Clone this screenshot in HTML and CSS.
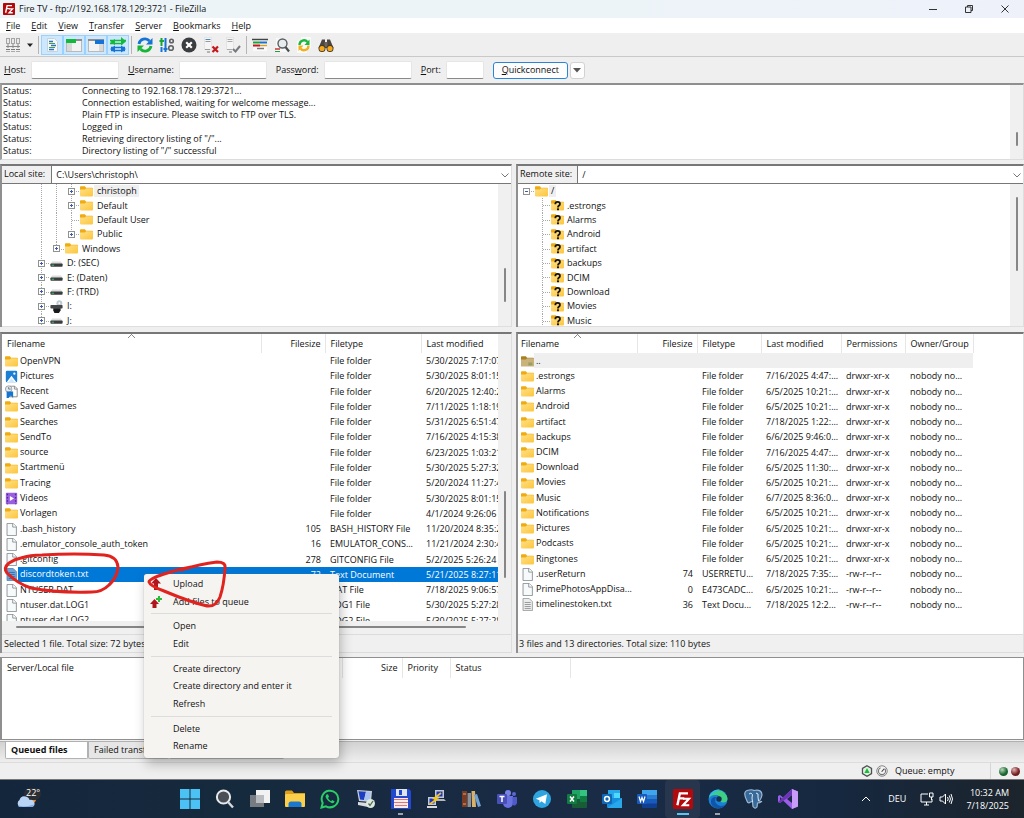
FILE: index.html
```html
<!DOCTYPE html>
<html lang="en">
<head>
<meta charset="utf-8">
<title>Fire TV - ftp://192.168.178.129:3721 - FileZilla</title>
<link rel="stylesheet" href="styles.css">
</head>
<body>
<svg class="sprite" aria-hidden="true">
  <linearGradient id="gFold" x1="0" y1="0" x2="1" y2="1"><stop offset="0" stop-color="#ffe08a"/><stop offset="1" stop-color="#fcc63c"/></linearGradient>
  <symbol id="folder" viewBox="0 0 16 16"><path d="M0 2.500Q0 1.500 1 1.500H6L7.500 3.500H15Q16 3.500 16 4.500V8H0Z" fill="#f0ab10"/><path d="M0 5.500H6L7.500 4H15.200Q16 4 16 5V13Q16 14 15 14H1Q0 14 0 13Z" fill="url(#gFold)"/></symbol>
  <symbol id="folderq" viewBox="0 0 16 16"><use href="#folder"/><path d="M5.300 6.500Q5.300 3.600 8.200 3.600Q11 3.600 11 6Q11 7.400 9.600 8.300Q8.600 9 8.600 10.400" fill="none" stroke="#111" stroke-width="2.200"/><rect x="7.400" y="11.500" width="2.400" height="2.300" fill="#111"/></symbol>
  <symbol id="folderup" viewBox="0 0 16 16"><path d="M0 2.500Q0 1.500 1 1.500H6L7.500 3.500H15Q16 3.500 16 4.500V8H0Z" fill="#a8801f"/><path d="M0 5.500H6L7.500 4H16V14H0Z" fill="#c9b37a"/><path d="M9 10h5M9 12h5" stroke="#7a8a5a"/></symbol>
  <symbol id="pics" viewBox="0 0 16 16"><rect x="1" y="1" width="14" height="14" rx="1.500" fill="#1b7fd6"/><path d="M2 15L8 7L14 15Z" fill="#fff"/><path d="M4 15L8 10L12 15Z" fill="#cfe8fb"/><circle cx="11.500" cy="4.500" r="1.400" fill="#fff"/></symbol>
  <symbol id="recent" viewBox="0 0 16 16"><path d="M6 1.500H12L15 4.500V14.500H6Z" fill="#fff" stroke="#777"/><path d="M11.500 1.500V5H15" fill="none" stroke="#777"/><circle cx="4.500" cy="5" r="4" fill="#e6e9ec" stroke="#8b949b"/><path d="M4.500 2.500V5H7" fill="none" stroke="#667"/><path d="M2 8H10V16L7 13L4.500 16H2Z" fill="#1576cf"/></symbol>
  <symbol id="video" viewBox="0 0 16 16"><rect x="1" y="1" width="14" height="14" rx="1" fill="#9a5fe0"/><path d="M3 2V15M13 2V15" stroke="#4f2390" stroke-width="1.500" stroke-dasharray="2 2"/><path d="M6 5L11 8L6 11Z" fill="#fff"/></symbol>
  <symbol id="file" viewBox="0 0 16 16"><path d="M2.500.500H10L14 4.500V15.500H2.500Z" fill="#f7fafb" stroke="#7d8386"/><path d="M9.500.500V5H14" fill="#fff" stroke="#7d8386"/></symbol>
  <symbol id="text" viewBox="0 0 16 16"><path d="M2.500.500H10L14 4.500V15.500H2.500Z" fill="#eceeee" stroke="#8d9294"/><path d="M4.500 5.500H12M4.500 8H12M4.500 10.500H12M4.500 13H12" stroke="#888"/></symbol>
  <symbol id="textsel" viewBox="0 0 16 16"><path d="M2.500.500H10L14 4.500V15.500H2.500Z" fill="#6ea5d8" stroke="#4a7fb5"/><path d="M4.500 5.500H12M4.500 8H12M4.500 10.500H12M4.500 13H12" stroke="#2f68a5"/></symbol>
  <symbol id="drive" viewBox="0 0 16 16"><path d="M2.500 5.500H13.500L15.500 9H.500Z" fill="#dcdcdc"/><rect x=".500" y="8" width="15" height="4" rx="1" fill="#3a3d3e"/><rect x="2" y="9.500" width="3" height="1.200" fill="#44c267"/></symbol>
  <symbol id="optical" viewBox="0 0 16 16"><circle cx="11.500" cy="4" r="3.600" fill="#bfcbd2"/><circle cx="11.500" cy="4" r="1.200" fill="#fff"/><rect x=".500" y="6" width="15" height="4.500" rx="1" fill="#444749"/><path d="M4 10H13V13L11 16H5.500L4 13Z" fill="#17191a"/></symbol>
  <symbol id="fz" viewBox="0 0 16 16"><rect width="16" height="16" rx="1" fill="#b3090d"/><path d="M3.500 13L5.500 3.500H12M4.800 7.500H9" fill="none" stroke="#fff" stroke-width="1.900"/><path d="M8 7.800H12.800L8 13H13" fill="none" stroke="#fff" stroke-width="1.700"/></symbol>
  <symbol id="caret-down" viewBox="0 0 8 8"><path d="M.500 2.500L4 6L7.500 2.500" fill="none" stroke="#777"/></symbol>
</svg>

<header class="titlebar">
  <svg class="app-icon" viewBox="0 0 16 16"><use href="#fz"/></svg>
  <span class="title">Fire TV - ftp://192.168.178.129:3721 - FileZilla</span>
  <div class="window-buttons">
    <button aria-label="Minimize"><svg viewBox="0 0 10 10"><path d="M1 5.500H9" /></svg></button>
    <button aria-label="Restore"><svg viewBox="0 0 10 10"><path d="M1.500 3H7V8.500H1.500ZM3.500 3V1.500H8.500V6.500H7"/></svg></button>
    <button aria-label="Close"><svg viewBox="0 0 10 10"><path d="M1.500 1.500L8.500 8.500M8.500 1.500L1.500 8.500"/></svg></button>
  </div>
</header>

<nav class="menubar">
  <button><u>F</u>ile</button><button><u>E</u>dit</button><button><u>V</u>iew</button><button><u>T</u>ransfer</button><button><u>S</u>erver</button><button><u>B</u>ookmarks</button><button><u>H</u>elp</button>
</nav>

<div class="toolbar">
  <button aria-label="Site Manager"><svg viewBox="0 0 16 16"><g fill="#e9e9e9" stroke="#a5a5a5"><rect x="1.500" y="1.500" width="3" height="5"/><rect x="6.500" y="1.500" width="3" height="5"/><rect x="11.500" y="1.500" width="3" height="5"/></g><path d="M3 7V11M8 7V11M13 7V11M1 9.500H15" stroke="#888" fill="none"/><path d="M1 12.500H5M6 12.500H10M11 12.500H15" stroke="#777"/><path d="M1 14.500H5M6 14.500H10M11 14.500H15" stroke="#aaa"/></svg></button>
  <button class="drop" aria-label="Site list"><svg viewBox="0 0 8 8"><path d="M1 2.500H7L4 6Z" fill="#222"/></svg></button>
  <i class="divider"></i>
  <button class="on" aria-label="Message log"><svg viewBox="0 0 16 16"><path d="M3.500 1.500H10.500L13.500 4.500V14.500H3.500Z" fill="#f4f7f9" stroke="#c6d3da"/><path d="M5 4.500H9M7 8.500H12M5 12.500H10" stroke="#2d74b8" stroke-width="1.300"/><path d="M5 6.500H11M5 10.500H11" stroke="#4a9a50" stroke-width="1.200"/></svg></button>
  <button class="on" aria-label="Local tree"><svg viewBox="0 0 16 16"><rect x=".500" y="2.500" width="15" height="12" fill="#f3f3f3" stroke="#b9b9b9"/><rect x="0" y="2" width="16" height="2" fill="#8e8e8e"/><rect x="0" y="2" width="10" height="4" fill="#13b93a"/><rect x="1" y="6" width="5" height="8" fill="#d9d9d9"/></svg></button>
  <button class="on" aria-label="Remote tree"><svg viewBox="0 0 16 16"><rect x=".500" y="2.500" width="15" height="12" fill="#f3f3f3" stroke="#b9b9b9"/><rect x="0" y="2" width="16" height="2" fill="#8e8e8e"/><rect x="7" y="3" width="9" height="4" fill="#1673d6"/><rect x="11" y="7" width="4" height="7" fill="#d9d9d9"/></svg></button>
  <button class="on" aria-label="Transfer queue"><svg viewBox="0 0 16 16"><path d="M0 3.500H16M0 6.500H13" stroke="#13b93a" stroke-width="1.500"/><path d="M11 0L16 4.500L11 8.500ZM5 2L0 5L5 8Z" fill="#13b93a"/><path d="M1 10.500H15M1 13.500H15" stroke="#1673d6" stroke-width="1.500"/><path d="M5 8.500L0 12L5 15.500ZM11 8.500L16 12L11 15.500Z" fill="#1673d6"/></svg></button>
  <i class="divider"></i>
  <button aria-label="Refresh"><svg viewBox="0 0 16 16"><path d="M2 7A6 6 0 0 1 12.500 4" fill="none" stroke="#1673d6" stroke-width="2.800"/><path d="M15.500 1V7.500H9Z" fill="#1673d6"/><path d="M14 9A6 6 0 0 1 3.500 12" fill="none" stroke="#17b53a" stroke-width="2.800"/><path d="M.500 15V8.500H7Z" fill="#17b53a"/></svg></button>
  <button aria-label="Process queue"><svg viewBox="0 0 16 16"><path d="M2.500 1V9M.500 4H5" stroke="#17a53a" stroke-width="2"/><path d="M6.500 1V15M4.500 12H8.500" stroke="#1673d6" stroke-width="2"/><path d="M2.500 10V15" stroke="#1673d6" stroke-width="2"/><g fill="none" stroke="#5e6265" stroke-width="1.600"><circle cx="12.500" cy="4" r="1.800"/><circle cx="12" cy="11" r="2.300"/></g></svg></button>
  <button aria-label="Cancel"><svg viewBox="0 0 16 16"><circle cx="8" cy="8" r="7.500" fill="#3a3e41"/><path d="M5.200 5.200L10.800 10.800M10.800 5.200L5.200 10.800" stroke="#fff" stroke-width="2.200"/></svg></button>
  <button aria-label="Disconnect"><svg viewBox="0 0 16 16"><rect x="1.500" y=".500" width="7" height="12" fill="#f5f5f5" stroke="#e4e4e4"/><path d="M2.500 2.500H7.500" stroke="#4a88c7"/><path d="M2.500 4.500H7.500M2 12.500H7" stroke="#999"/><path d="M4 15H7" stroke="#777"/><path d="M9.500 9.500L15 15M15 9.500L9.500 15" stroke="#c4161c" stroke-width="2.200"/></svg></button>
  <button aria-label="Reconnect"><svg viewBox="0 0 16 16"><rect x="1.500" y=".500" width="7" height="12" fill="#f5f5f5" stroke="#e4e4e4"/><path d="M2.500 2.500H7.500M2.500 4.500H7.500M2 12.500H7" stroke="#aaa"/><path d="M4 15H7" stroke="#777"/><path d="M8 12L10.500 14.500L15 9" fill="none" stroke="#777b7e" stroke-width="2"/></svg></button>
  <i class="divider"></i>
  <button aria-label="Filter"><svg viewBox="0 0 16 16"><rect x="1" y="2" width="14" height="12" fill="#fafafa"/><path d="M0 2.500H16" stroke="#444" stroke-width="1.500"/><path d="M1 5.500H8" stroke="#17a53a" stroke-width="2"/><path d="M1 8.500H8" stroke="#c4161c" stroke-width="2"/><path d="M8 5.500H15" stroke="#1673d6" stroke-width="2"/><path d="M8 8.500H15" stroke="#d9a020" stroke-width="1.500"/><path d="M5 11.500H12" stroke="#777" stroke-width="1.500"/></svg></button>
  <button aria-label="Compare"><svg viewBox="0 0 16 16"><path d="M2 1H11L14 4V15H2Z" fill="#f8f8f8"/><circle cx="8.500" cy="6.500" r="4.500" fill="#e7ecef" stroke="#5a5e61" stroke-width="1.400"/><path d="M11.500 10L15 14.500" stroke="#4a4e51" stroke-width="2.200"/><path d="M1 12H6" stroke="#c4161c" stroke-width="1.300"/><path d="M1 14.500H6" stroke="#17a53a"/></svg></button>
  <button aria-label="Synchronized browsing"><svg viewBox="0 0 16 16"><path d="M5 0H15V11H5ZM1 4H11V16H1Z" fill="#fafafa"/><path d="M3.500 8A4.500 4.500 0 0 1 11.500 5" fill="none" stroke="#19b83c" stroke-width="2.300"/><path d="M13.500 2.500V8H8.500Z" fill="#19b83c"/><path d="M12.500 8.500A4.500 4.500 0 0 1 4.500 11.500" fill="none" stroke="#f2ae1b" stroke-width="2.300"/><path d="M2.500 14V8.500H7.500Z" fill="#f2ae1b"/></svg></button>
  <button aria-label="Search"><svg viewBox="0 0 16 16"><path d="M4 2.500H7V6H9V2.500H12L15.500 11H.500Z" fill="#4a4541"/><rect x="6.500" y="5" width="3" height="5" fill="#6a645e"/><circle cx="4" cy="11.500" r="3.500" fill="#4a3b20"/><circle cx="12" cy="11.500" r="3.500" fill="#4a3b20"/><circle cx="4" cy="11.500" r="2.600" fill="#f5a81a"/><circle cx="12" cy="11.500" r="2.600" fill="#f5a81a"/></svg></button>
</div>

<form class="quickbar">
  <label for="host"><u>H</u>ost:</label><input id="host" class="wide">
  <label for="user"><u>U</u>sername:</label><input id="user" class="wide">
  <label for="pass">Pass<u>w</u>ord:</label><input id="pass" class="wide" type="password">
  <label for="port"><u>P</u>ort:</label><input id="port" class="narrow">
  <button type="button" class="connect"><u>Q</u>uickconnect</button>
  <button type="button" class="history" aria-label="History"><svg viewBox="0 0 8 8"><path d="M0 2H8L4 6.500Z" fill="#555"/></svg></button>
</form>

<section class="log">
  <table>
    <tr><td>Status:</td><td>Connecting to 192.168.178.129:3721...</td></tr>
    <tr><td>Status:</td><td>Connection established, waiting for welcome message...</td></tr>
    <tr><td>Status:</td><td>Plain FTP is insecure. Please switch to FTP over TLS.</td></tr>
    <tr><td>Status:</td><td>Logged in</td></tr>
    <tr><td>Status:</td><td>Retrieving directory listing of "/"...</td></tr>
    <tr><td>Status:</td><td>Directory listing of "/" successful</td></tr>
  </table>
  <div class="scroll"><i class="thumb log-thumb"></i></div>
</section>

<main class="panes">
  <section class="pane local">
    <div class="box site">
      <div class="site-row"><label for="lsite">Local site:</label><select id="lsite"><option>C:\Users\christoph\</option></select><svg><use href="#caret-down"/></svg></div>
      <div class="tree-wrap">
        <ul class="tree">
          <li><i class="guide"></i><i class="guide"></i><i class="guide arm"><button class="exp" aria-label="Expand"></button></i><svg><use href="#folder"/></svg><span class="cur">christoph</span></li>
          <li><i class="guide"></i><i class="guide"></i><i class="guide arm"><button class="exp" aria-label="Expand"></button></i><svg><use href="#folder"/></svg><span>Default</span></li>
          <li><i class="guide"></i><i class="guide"></i><i class="guide arm"></i><svg><use href="#folder"/></svg><span>Default User</span></li>
          <li><i class="guide"></i><i class="guide"></i><i class="guide arm last"><button class="exp" aria-label="Expand"></button></i><svg><use href="#folder"/></svg><span>Public</span></li>
          <li><i class="guide"></i><i class="guide arm last"><button class="exp" aria-label="Expand"></button></i><svg><use href="#folder"/></svg><span>Windows</span></li>
          <li><i class="guide arm"><button class="exp" aria-label="Expand"></button></i><svg><use href="#drive"/></svg><span>D: (SEC)</span></li>
          <li><i class="guide arm"><button class="exp" aria-label="Expand"></button></i><svg><use href="#drive"/></svg><span>E: (Daten)</span></li>
          <li><i class="guide arm"><button class="exp" aria-label="Expand"></button></i><svg><use href="#drive"/></svg><span>F: (TRD)</span></li>
          <li><i class="guide arm"><button class="exp" aria-label="Expand"></button></i><svg><use href="#optical"/></svg><span>I:</span></li>
          <li><i class="guide arm"><button class="exp" aria-label="Expand"></button></i><svg><use href="#drive"/></svg><span>J:</span></li>
        </ul>
        <div class="scroll"><i class="thumb ltree-thumb"></i></div>
      </div>
    </div>
    <div class="box files">
      <div class="list-wrap">
        <div class="list">
          <table>
            <colgroup><col class="l-name"><col class="l-size"><col class="l-type"><col class="l-mod"></colgroup>
            <thead><tr><th class="sorted">Filename</th><th class="num">Filesize</th><th>Filetype</th><th>Last modified</th></tr></thead>
            <tbody>
              <tr><td><svg><use href="#folder"/></svg>OpenVPN</td><td></td><td>File folder</td><td>5/30/2025 7:17:07</td></tr>
              <tr><td><svg><use href="#pics"/></svg>Pictures</td><td></td><td>File folder</td><td>5/30/2025 8:01:15</td></tr>
              <tr><td><svg><use href="#recent"/></svg>Recent</td><td></td><td>File folder</td><td>6/20/2025 12:40:2</td></tr>
              <tr><td><svg><use href="#folder"/></svg>Saved Games</td><td></td><td>File folder</td><td>7/11/2025 1:18:19</td></tr>
              <tr><td><svg><use href="#folder"/></svg>Searches</td><td></td><td>File folder</td><td>5/31/2025 6:51:47</td></tr>
              <tr><td><svg><use href="#folder"/></svg>SendTo</td><td></td><td>File folder</td><td>7/16/2025 4:15:38</td></tr>
              <tr><td><svg><use href="#folder"/></svg>source</td><td></td><td>File folder</td><td>6/23/2025 1:03:21</td></tr>
              <tr><td><svg><use href="#folder"/></svg>Startmenü</td><td></td><td>File folder</td><td>5/30/2025 5:27:32</td></tr>
              <tr><td><svg><use href="#folder"/></svg>Tracing</td><td></td><td>File folder</td><td>5/20/2024 11:27:4</td></tr>
              <tr><td><svg><use href="#video"/></svg>Videos</td><td></td><td>File folder</td><td>5/30/2025 8:01:15</td></tr>
              <tr><td><svg><use href="#folder"/></svg>Vorlagen</td><td></td><td>File folder</td><td>4/1/2024 9:26:06</td></tr>
              <tr><td><svg><use href="#file"/></svg>.bash_history</td><td class="num">105</td><td>BASH_HISTORY File</td><td>11/20/2024 8:35:2</td></tr>
              <tr><td><svg><use href="#file"/></svg>.emulator_console_auth_token</td><td class="num">16</td><td>EMULATOR_CONS...</td><td>11/21/2024 2:30:4</td></tr>
              <tr><td><svg><use href="#file"/></svg>.gitconfig</td><td class="num">278</td><td>GITCONFIG File</td><td>5/2/2025 5:26:24</td></tr>
              <tr class="selected"><td><svg><use href="#textsel"/></svg>discordtoken.txt</td><td class="num">72</td><td>Text Document</td><td>5/21/2025 8:27:11</td></tr>
              <tr><td><svg><use href="#file"/></svg>NTUSER.DAT</td><td class="num"></td><td>DAT File</td><td>7/18/2025 9:06:57</td></tr>
              <tr><td><svg><use href="#file"/></svg>ntuser.dat.LOG1</td><td class="num"></td><td>LOG1 File</td><td>5/30/2025 5:27:28</td></tr>
              <tr><td><svg><use href="#file"/></svg>ntuser.dat.LOG2</td><td class="num"></td><td>LOG2 File</td><td>5/30/2025 5:27:28</td></tr>
            </tbody>
          </table>
        </div>
        <div class="scroll"><i class="thumb llist-thumb"></i></div>
      </div>
      <div class="hscroll"><i></i></div>
      <div class="pane-status">Selected 1 file. Total size: 72 bytes</div>
    </div>
  </section>

  <section class="pane remote">
    <div class="box site">
      <div class="site-row"><label for="rsite">Remote site:</label><select id="rsite"><option>/</option></select><svg><use href="#caret-down"/></svg></div>
      <div class="tree-wrap">
        <ul class="tree">
          <li><i class="guide root"><button class="exp open" aria-label="Collapse"></button></i><svg><use href="#folder"/></svg><span class="cur">/</span></li>
          <li><i class="guide none"></i><i class="guide arm"></i><svg><use href="#folderq"/></svg><span>.estrongs</span></li>
          <li><i class="guide none"></i><i class="guide arm"></i><svg><use href="#folderq"/></svg><span>Alarms</span></li>
          <li><i class="guide none"></i><i class="guide arm"></i><svg><use href="#folderq"/></svg><span>Android</span></li>
          <li><i class="guide none"></i><i class="guide arm"></i><svg><use href="#folderq"/></svg><span>artifact</span></li>
          <li><i class="guide none"></i><i class="guide arm"></i><svg><use href="#folderq"/></svg><span>backups</span></li>
          <li><i class="guide none"></i><i class="guide arm"></i><svg><use href="#folderq"/></svg><span>DCIM</span></li>
          <li><i class="guide none"></i><i class="guide arm"></i><svg><use href="#folderq"/></svg><span>Download</span></li>
          <li><i class="guide none"></i><i class="guide arm"></i><svg><use href="#folderq"/></svg><span>Movies</span></li>
          <li><i class="guide none"></i><i class="guide arm"></i><svg><use href="#folderq"/></svg><span>Music</span></li>
        </ul>
        <div class="scroll"><i class="thumb rtree-thumb"></i></div>
      </div>
    </div>
    <div class="box files">
      <div class="list-wrap">
        <div class="list">
          <table>
            <colgroup><col class="r-name"><col class="r-size"><col class="r-type"><col class="r-mod"><col class="r-perm"><col class="r-own"></colgroup>
            <thead><tr><th class="sorted">Filename</th><th class="num">Filesize</th><th>Filetype</th><th>Last modified</th><th>Permissions</th><th>Owner/Group</th></tr></thead>
            <tbody>
              <tr class="focus"><td><svg><use href="#folderup"/></svg>..</td><td></td><td></td><td></td><td></td><td></td></tr>
              <tr><td><svg><use href="#folder"/></svg>.estrongs</td><td></td><td>File folder</td><td>7/16/2025 4:47:...</td><td>drwxr-xr-x</td><td>nobody no...</td></tr>
              <tr><td><svg><use href="#folder"/></svg>Alarms</td><td></td><td>File folder</td><td>6/5/2025 10:21:...</td><td>drwxr-xr-x</td><td>nobody no...</td></tr>
              <tr><td><svg><use href="#folder"/></svg>Android</td><td></td><td>File folder</td><td>6/5/2025 10:21:...</td><td>drwxr-xr-x</td><td>nobody no...</td></tr>
              <tr><td><svg><use href="#folder"/></svg>artifact</td><td></td><td>File folder</td><td>7/18/2025 1:22:...</td><td>drwxr-xr-x</td><td>nobody no...</td></tr>
              <tr><td><svg><use href="#folder"/></svg>backups</td><td></td><td>File folder</td><td>6/6/2025 9:46:0...</td><td>drwxr-xr-x</td><td>nobody no...</td></tr>
              <tr><td><svg><use href="#folder"/></svg>DCIM</td><td></td><td>File folder</td><td>7/16/2025 4:47:...</td><td>drwxr-xr-x</td><td>nobody no...</td></tr>
              <tr><td><svg><use href="#folder"/></svg>Download</td><td></td><td>File folder</td><td>6/5/2025 11:30:...</td><td>drwxr-xr-x</td><td>nobody no...</td></tr>
              <tr><td><svg><use href="#folder"/></svg>Movies</td><td></td><td>File folder</td><td>6/5/2025 10:21:...</td><td>drwxr-xr-x</td><td>nobody no...</td></tr>
              <tr><td><svg><use href="#folder"/></svg>Music</td><td></td><td>File folder</td><td>6/7/2025 8:36:0...</td><td>drwxr-xr-x</td><td>nobody no...</td></tr>
              <tr><td><svg><use href="#folder"/></svg>Notifications</td><td></td><td>File folder</td><td>6/5/2025 10:21:...</td><td>drwxr-xr-x</td><td>nobody no...</td></tr>
              <tr><td><svg><use href="#folder"/></svg>Pictures</td><td></td><td>File folder</td><td>6/5/2025 10:21:...</td><td>drwxr-xr-x</td><td>nobody no...</td></tr>
              <tr><td><svg><use href="#folder"/></svg>Podcasts</td><td></td><td>File folder</td><td>6/5/2025 10:21:...</td><td>drwxr-xr-x</td><td>nobody no...</td></tr>
              <tr><td><svg><use href="#folder"/></svg>Ringtones</td><td></td><td>File folder</td><td>6/5/2025 10:21:...</td><td>drwxr-xr-x</td><td>nobody no...</td></tr>
              <tr><td><svg><use href="#file"/></svg>.userReturn</td><td class="num">74</td><td>USERRETU...</td><td>7/18/2025 7:35:...</td><td>-rw-r--r--</td><td>nobody no...</td></tr>
              <tr><td><svg><use href="#file"/></svg>PrimePhotosAppDisa...</td><td class="num">0</td><td>E473CADC...</td><td>6/5/2025 10:21:...</td><td>-rw-r--r--</td><td>nobody no...</td></tr>
              <tr><td><svg><use href="#text"/></svg>timelinestoken.txt</td><td class="num">36</td><td>Text Docu...</td><td>7/18/2025 12:2...</td><td>-rw-r--r--</td><td>nobody no...</td></tr>
            </tbody>
          </table>
        </div>
      </div>
      <div class="pane-status">3 files and 13 directories. Total size: 110 bytes</div>
    </div>
  </section>
</main>

<section class="queue">
  <table>
    <colgroup><col class="q-file"><col class="q-size"><col class="q-prio"><col class="q-stat"></colgroup>
    <thead><tr><th>Server/Local file</th><th class="num">Size</th><th>Priority</th><th>Status</th></tr></thead>
  </table>
</section>
<div class="tabs"><button class="active">Queued files</button><button>Failed transfers</button><button class="wide-tab" aria-label="Successful transfers"></button></div>

<footer class="statusbar">
  <svg viewBox="0 0 16 16"><path d="M8 1L14 4.500V11.500L8 15L2 11.500V4.500Z" fill="#eee" stroke="#4d5154" stroke-width="1.800"/><circle cx="8" cy="8" r="4.500" fill="#d7f5d9"/><path d="M8 4L11.500 10.500H4.500Z" fill="#1fba3c"/></svg>
  <svg viewBox="0 0 16 16"><circle cx="8" cy="8" r="7" fill="#f3f3f3" stroke="#666"/><circle cx="8" cy="8" r="4.800" fill="none" stroke="#777" stroke-width="1.500" stroke-dasharray="20 6"/><path d="M7.500 9L11 5" stroke="#444" stroke-width="1.500"/></svg>
  <span class="queue-text">Queue: empty</span>
  <div class="leds"><i class="led green"></i><i class="led red"></i></div>
</footer>

<nav class="taskbar">
  <div class="weather">
    <svg viewBox="0 0 26 24"><circle cx="17" cy="12" r="4" fill="#e98a2e"/><rect x="9" y="1" width="17" height="12" rx="6" fill="#2b2e33"/><path d="M5 20A4 4 0 0 1 4.500 13Q6 8.500 10.500 9.500Q14 10 14.500 13A3.600 3.600 0 0 1 17 20Z" fill="#b9d4f5"/><path d="M3 18Q8 21 19 17.500Q18.500 20 16.500 20H5Q3 20 3 18Z" fill="#7eaae6"/></svg>
    <span>22°</span>
  </div>
  <div class="apps">
    <button aria-label="Start"><svg viewBox="0 0 20 20"><path d="M0 0H9.500V9.500H0ZM10.500 0H20V9.500H10.500ZM0 10.500H9.500V20H0ZM10.500 10.500H20V20H10.500Z" fill="#4cc2f4"/></svg></button>
    <button aria-label="Search"><svg viewBox="0 0 20 20"><circle cx="8.500" cy="8" r="6.600" fill="#4a4f57" stroke="#e8eaed" stroke-width="2"/><path d="M13 13L18 18.500" stroke="#d5d8dc" stroke-width="2.400"/></svg></button>
    <button aria-label="Task view"><svg viewBox="0 0 20 20"><rect x="6" y="1" width="14" height="13" fill="#f2f2f2"/><rect x="0" y="6" width="14" height="12" fill="#777c82"/><rect x="6" y="6" width="8" height="8" fill="#b9bcc0"/></svg></button>
    <button aria-label="Explorer"><svg viewBox="0 0 20 20"><path d="M0 3Q0 1.500 1.500 1.500H7L9 4H20V9H0Z" fill="#dfa019"/><path d="M1 5H20V17Q20 18 19 18H1Q0 18 0 17V6Z" fill="#fcd04a"/><path d="M3.500 18V15Q3.500 12.500 6 12.500H14Q16.500 12.500 16.500 15V18Z" fill="#1b78cc"/></svg></button>
    <button aria-label="WhatsApp"><svg viewBox="0 0 20 20"><path d="M1.500 18.500L2.700 14A8.300 8.300 0 1 1 6 17.300Z" fill="none" stroke="#29cf66" stroke-width="2"/><path d="M6.300 5.500Q5 7 6 9Q8 13 12 14.300Q14 14.500 14.700 12.500L12.300 11L11 12.200Q8.800 11 8 9L9 7.800L8 5.300Z" fill="#29cf66"/></svg></button>
    <button aria-label="Remote desktop"><svg viewBox="0 0 20 20"><path d="M1 1L16 2L15 13L3 12Z" fill="#c8ced8"/><path d="M2.500 2.200L10 2.800L8 11L4 10.500Z" fill="#1b3fc0"/><path d="M10 2.800L14.500 3.200L13.800 11.500L8 11Z" fill="#a9c3f0"/><path d="M2 13L12 14V18L2 16Z" fill="#d9dde0"/><circle cx="14.500" cy="14.500" r="4.500" fill="#dfe8df"/><path d="M12.500 14.500L14 16.500L17 12" stroke="#4a6f50" fill="none" stroke-width="1.300"/></svg></button>
    <button class="running" aria-label="Editor"><svg viewBox="0 0 20 20"><path d="M0 0H18L20 2V20H0Z" fill="#2148cf"/><rect x="5" y="0" width="11" height="7" fill="#dde3ee"/><rect x="8" y="1" width="3" height="5" fill="#2148cf"/><rect x="3" y="9" width="14" height="10" fill="#f7eaea"/><path d="M3 10.500H17M3 13.500H17M4 16.500H16" stroke="#dc7478" stroke-width="1.200"/></svg></button>
    <button aria-label="PuTTY"><svg viewBox="0 0 20 20"><rect x="9" y="1" width="9" height="8" fill="#c7c9cf"/><rect x="10.500" y="2.500" width="6" height="5" fill="#1736c9"/><path d="M8 10H18L20 12H8Z" fill="#b4b6bd"/><rect x="2" y="8" width="8" height="8" fill="#c7c9cf"/><rect x="3.500" y="9.500" width="5" height="5" fill="#1736c9"/><path d="M1 17H11V19H1Z" fill="#d8dae0"/><path d="M15 4L8 9.500L11 10L4 15" stroke="#f3c51a" stroke-width="1.800" fill="none"/></svg></button>
    <button aria-label="Calibre"><svg viewBox="0 0 20 20"><rect x="1" y="2" width="5" height="16" fill="#7a3a24"/><path d="M2 5H5M2 15H5" stroke="#d5a86b"/><rect x="6.500" y="4" width="3.500" height="14" fill="#8d9298"/><path d="M10.500 2L14 2L15 18H11Z" fill="#d9b169"/><path d="M13 6L16 5L20 17L17 18Z" fill="#6fa3d6"/></svg></button>
    <button aria-label="Teams"><svg viewBox="0 0 20 20"><circle cx="11" cy="4" r="3" fill="#7b83eb"/><circle cx="17" cy="5" r="2" fill="#5e66cf"/><path d="M6 7H16V14A5 5 0 0 1 6 14Z" fill="#6a72e0"/><path d="M15.500 8H20V13A3 3 0 0 1 15.500 16Z" fill="#5059c9"/><rect x="0" y="5" width="10" height="10" rx="1" fill="#4850b8"/><path d="M2.500 7.500H7.500M5 7.500V13" stroke="#fff" stroke-width="1.500"/></svg></button>
    <button aria-label="Telegram"><svg viewBox="0 0 20 20"><circle cx="10" cy="10" r="9" fill="#2ea5e0"/><path d="M3.800 9.800L15 5.300L13.300 15L9.500 12.300L7.500 14V11.300Z" fill="#fff"/></svg></button>
    <button aria-label="Excel"><svg viewBox="0 0 20 20"><rect x="5" y="1" width="15" height="18" rx="1" fill="#185c37"/><rect x="5" y="1" width="8" height="9" fill="#21a366"/><rect x="13" y="1" width="7" height="6" fill="#33c481"/><rect x="13" y="7" width="7" height="6" fill="#107c41"/><rect x="0" y="5" width="10" height="10" rx="1" fill="#107c41"/><path d="M3 7.500L7 12.500M7 7.500L3 12.500" stroke="#fff" stroke-width="1.500"/></svg></button>
    <button aria-label="Outlook"><svg viewBox="0 0 20 20"><rect x="6" y="1" width="12" height="12" fill="#28a8ea"/><rect x="12" y="4" width="6" height="5" fill="#50d9ff"/><path d="M5 9L20 9V18Q20 19 19 19H6L5 18Z" fill="#1490df"/><path d="M5 19L20 9V19Z" fill="#28a8ea"/><rect x="0" y="5" width="10" height="10" rx="1" fill="#0f68b8"/><circle cx="5" cy="10" r="2.400" fill="none" stroke="#fff" stroke-width="1.500"/></svg></button>
    <button aria-label="Word"><svg viewBox="0 0 20 20"><rect x="5" y="1" width="15" height="18" rx="1" fill="#103f91"/><rect x="5" y="1" width="15" height="5" fill="#41a5ee"/><rect x="5" y="6" width="15" height="4" fill="#2b7cd3"/><rect x="5" y="10" width="15" height="4.500" fill="#185abd"/><rect x="0" y="5" width="10" height="10" rx="1" fill="#185abd"/><path d="M2 7.500L3.500 12.500L5 8.500L6.500 12.500L8 7.500" fill="none" stroke="#fff" stroke-width="1.200"/></svg></button>
    <button class="current" aria-label="FileZilla"><svg viewBox="0 0 16 16"><use href="#fz"/></svg></button>
    <button class="running" aria-label="Edge"><svg viewBox="0 0 20 20"><circle cx="10" cy="10" r="9.500" fill="#1c7fd6"/><path d="M1 8A9.500 9.500 0 0 1 19.500 9.500Q19.500 13.500 15 13.500Q11.500 13 13 10.500Q12 5.500 7 6Q3 6 1 9Z" fill="#3fcf84"/><path d="M1 8A9.500 9.500 0 0 1 12 .800Q6 3 3.500 6Z" fill="#35bde6"/><path d="M8 8Q5.500 13 10 16Q14 18 17.500 15.500Q14 20 9 19.400Q2 17.500 3 11Q4.500 7.500 8 8Z" fill="#0f55a8"/><circle cx="11" cy="10" r="2.700" fill="#12304f"/></svg></button>
    <button aria-label="PostgreSQL"><svg viewBox="0 0 20 20"><path d="M4 1.500Q9 0 11 1.500Q19 0 19 6Q18 11 15.500 12Q18 12 18.500 12.500Q17 14 14.500 14L14 18Q12 20.500 10 17.500L9.500 12.500L7.500 13Q5 15 4 12Q1 6 2 3.500Q2.500 2 4 1.500Z" fill="#38699b" stroke="#9db9d2" stroke-width="1.200"/><path d="M6 5Q8 3 9.500 5.500L9 9L9.500 13M13 4Q16 4 15 8L15.500 12" fill="none" stroke="#dfe9f2" stroke-width="1"/></svg></button>
    <button aria-label="Visual Studio"><svg viewBox="0 0 20 20"><path d="M14 0L20 2.500V17.500L14 20L5 11.500L2 14L0 13V7L2 6L5 8.500Z" fill="#9b5ee8"/><path d="M14 0L20 2.500V17.500L14 20Z" fill="#c79bf7"/><path d="M14 6V14L9 10ZM2 8V12L4 10Z" fill="#182a44"/><path d="M0 13L14 0V6L2 14Z" fill="#6c35b5"/></svg></button>
  </div>
  <div class="tray">
    <svg class="chev" viewBox="0 0 10 10"><path d="M1 7L5 3L9 7"/></svg>
    <span>DEU</span>
    <svg class="net" viewBox="0 0 14 14"><path d="M8 2H1V10H12V7M4 13H9M6.500 10V13M9.500 1H13V5H9.500ZM11.500 5V8"/></svg>
    <svg class="vol" viewBox="0 0 14 14"><path d="M1 5H3.500L6.500 2V12L3.500 9H1ZM8.500 5Q10 7 8.500 9M10.300 3.500Q12.600 7 10.300 10.500M12 2Q15 7 12 12"/></svg>
    <div class="clock"><time>10:32 AM</time><time>7/18/2025</time></div>
  </div>
</nav>

<div class="context" role="menu">
  <button role="menuitem"><svg viewBox="0 0 12 12"><path d="M6 0L11 5.500H8V12H4V5.500H1Z" fill="#b0161b"/></svg>Upload</button>
  <button role="menuitem"><svg viewBox="0 0 12 12"><path d="M4.500 3L9 8H6.500V12H2.500V8H0Z" fill="#b0161b"/><path d="M9 0V6M6 3H12" stroke="#2dbb3c" stroke-width="2"/></svg>Add files to queue</button>
  <hr>
  <button role="menuitem">Open</button>
  <button role="menuitem">Edit</button>
  <hr>
  <button role="menuitem">Create directory</button>
  <button role="menuitem">Create directory and enter it</button>
  <button role="menuitem">Refresh</button>
  <hr>
  <button role="menuitem">Delete</button>
  <button role="menuitem">Rename</button>
</div>

<svg class="marks" viewBox="0 0 240 60" aria-hidden="true">
  <path d="M21 9Q30 6 42 6Q75 4 104 6Q117 7 118 18Q117 29 109 36Q102 43 92 43Q55 44 31 39Q18 35 7 24Q3 19 9 14Q15 10 21 9"/>
  <path d="M191 18Q178 20 164 25Q149 30 149 33Q150 37 164 42Q190 53 207 57Q216 58 220 48Q224 36 225 19Q226 13 217 13Q200 15 181 21"/>
</svg>
</body>
</html>
```
FILE: styles.css
```css
* { box-sizing: border-box; }
body {
  margin: 0;
  min-height: 100vh;
  display: flex;
  flex-direction: column;
  position: relative;
  overflow-x: hidden;
  background: #efefef;
  color: #111;
  font: 9px/12px "Open Sans", "Noto Sans", sans-serif;
}
button, input, select { font: inherit; color: inherit; margin: 0; }
button { border: 0; padding: 0; background: none; }
table { border-collapse: collapse; border-spacing: 0; table-layout: fixed; }
th { font-weight: 400; text-align: left; }
td, th { white-space: nowrap; overflow: hidden; }
.sprite { position: absolute; width: 0; height: 0; }

/* Title and menus */
.titlebar {
  display: flex;
  align-items: center;
  height: 18px;
  padding-left: 3px;
  gap: 4px;
  background: linear-gradient(90deg, #edf4f8 60%, #eef1fa);
}
.app-icon { width: 12px; height: 12px; }
.title { flex: 1; }
.window-buttons { display: flex; padding-right: 1px; }
.window-buttons button { width: 36px; height: 16px; display: grid; place-items: center; }
.window-buttons svg { width: 10px; height: 10px; fill: none; stroke: #333; }
.menubar { display: flex; gap: 11px; height: 15px; padding-left: 6px; background: #fff; align-items: center; }

/* Toolbar */
.toolbar { display: flex; align-items: center; height: 24px; padding-left: 2px; border-bottom: 1px solid #c9c9c9; }
.toolbar button { width: 22px; height: 20px; display: grid; place-items: center; }
.toolbar button svg { width: 16px; height: 16px; }
.toolbar .drop { width: 12px; }
.toolbar .drop svg { width: 8px; height: 8px; }
.toolbar .on { background: #cce8ff; border: 1px solid #99d1ff; }
.divider { width: 1px; height: 18px; margin: 0 2px; background: #b5b5b5; }

/* Quickconnect */
.quickbar { display: flex; align-items: center; height: 26px; padding-left: 4px; }
.quickbar input {
  height: 18px;
  margin: 0 9px 0 5px;
  padding: 0 3px;
  border: 1px solid #e5e5e5;
  border-bottom-color: #8a8a8a;
  border-radius: 2px;
  background: #fff;
}
.quickbar .wide { width: 88px; }
.quickbar .narrow { width: 38px; }
.connect { width: 75px; height: 17px; border: 1px solid #2a84d8; border-radius: 3px; background: #fdfdfd; }
.history { width: 15px; height: 17px; margin-left: 2px; border: 1px solid #d2d2d2; border-radius: 3px; background: #fdfdfd; display: grid; place-items: center; }
.history svg { width: 8px; height: 8px; }

/* Scroll bars */
.scroll { width: 13px; flex: none; display: flex; flex-direction: column; align-items: center; background: #f0f0f0; }
.thumb { width: 2px; border-radius: 1px; background: #868686; }
.log-thumb { height: 14px; margin-top: 47px; }
.ltree-thumb { height: 34px; margin-top: 84px; }
.rtree-thumb { height: 74px; margin-top: 13px; }
.llist-thumb { height: 87px; margin-top: 157px; }

/* Message log */
.log {
  display: flex;
  height: 77px;
  margin-bottom: 4px;
  border: 1px solid #dcdcdc;
  border-top: 2px solid #8f8f8f;
  border-left: 2px solid #a0a0a0;
  background: #fff;
}
.log table { flex: 1; display: block; }
.log td { padding: 0 0 0 1px; height: 12px; }
.log td:first-child { width: 79px; }

/* Two panes */
.panes { display: flex; gap: 4px; }
.pane { flex: 508 1 0; min-width: 0; display: flex; flex-direction: column; gap: 5px; }
.pane.local { flex-grow: 512; }
.box { border-left: 2px solid #8f8f8f; border-top: 2px solid #777; border-right: 1px solid #dedede; }
.site-row { display: flex; align-items: center; height: 18px; border-bottom: 1px solid #777; background: #fff; }
.site-row label { align-self: stretch; padding: 2px 5px 0 2px; border-right: 1px solid #777; background: #f0f0f0; }
.local .site-row label { padding-right: 6px; }
.site-row select { flex: 1; align-self: stretch; padding: 0 4px; border: 0; appearance: none; background: none; }
.site-row svg { width: 8px; height: 8px; margin-right: 2px; }
.tree-wrap { display: flex; height: 143px; overflow: hidden; background: #fff; border-bottom: 1px solid #dedede; }
.tree { flex: 1; list-style: none; margin: 0; padding: 0 0 0 32px; height: 144px; display: grid; grid-auto-rows: 1fr; }
.remote .tree { padding-left: 1px; }
.tree li { display: flex; align-items: center; }
.tree svg { width: 13px; height: 13px; margin: 0 1px; }
.tree span { padding: 0 2px; }
.local .tree span { padding-left: 3px; }
.tree .cur { background: #efefef; }
.guide {
  width: 15px;
  align-self: stretch;
  display: grid;
  place-items: center;
  background: repeating-linear-gradient(#a8a8a8 0 1px, transparent 1px 2px) 7px 0 / 1px 100% no-repeat;
}
.guide.none { width: 16px; background: none; }
.guide.arm {
  background:
    repeating-linear-gradient(#a8a8a8 0 1px, transparent 1px 2px) 7px 0 / 1px 100% no-repeat,
    repeating-linear-gradient(90deg, #a8a8a8 0 1px, transparent 1px 2px) 8px 7px / 8px 1px no-repeat;
}
.guide.last { background-size: 1px 50%, 8px 1px; }
.guide.root { background: repeating-linear-gradient(90deg, #a8a8a8 0 1px, transparent 1px 2px) 8px 7px / 8px 1px no-repeat; }
.exp {
  width: 7px;
  height: 7px;
  border: 1px solid #919191;
  background:
    linear-gradient(#3b5fa8, #3b5fa8) center / 3px 1px no-repeat,
    linear-gradient(#3b5fa8, #3b5fa8) center / 1px 3px no-repeat,
    #fff;
}
.exp.open { background: linear-gradient(#3b5fa8, #3b5fa8) center / 3px 1px no-repeat, #fff; }

/* File lists */
.files { flex: 1; display: flex; flex-direction: column; background: #f0f0f0; }
.list-wrap { flex: 1; display: flex; background: #fff; min-height: 0; }
.local .list-wrap { height: 287px; flex: none; }
.list { flex: 1; min-width: 0; overflow: hidden; }
.list table { height: 278px; width: 455px; }
.local .list table { height: 294px; width: 519px; }
.l-name { width: 259px; }
.l-size { width: 64px; }
.l-type { width: 96px; }
.l-mod { width: 100px; }
.r-name { width: 119px; }
.r-size { width: 60px; }
.r-type { width: 64px; }
.r-mod { width: 80px; }
.r-perm { width: 64px; }
.r-own { width: 68px; }
.list th, .queue th { height: 19px; padding: 0 4px 0 5px; border-right: 1px solid #e6e6e6; }
.list td { padding: 0 0 0 5px; line-height: 13px; }
.list td:first-child { padding-left: 3px; }
.remote .list td:first-child, .remote .sorted { padding-left: 3px; }
.list .num, .queue .num { text-align: right; padding-right: 4px; }
.list td svg { width: 13px; height: 13px; margin-right: 2px; vertical-align: middle; }
.sorted {
  background:
    linear-gradient(45deg, transparent 40%, #888 40% 60%, transparent 60%) calc(50% + 2px) 0 / 4px 4px no-repeat,
    linear-gradient(-45deg, transparent 40%, #888 40% 60%, transparent 60%) calc(50% - 1px) 0 / 4px 4px no-repeat;
}
.selected { background: #0078d7; color: #fff; }
.selected td:first-child { background: linear-gradient(90deg, #fff 16px, #0078d7 16px); }
.focus { background: #efefef; }
.focus td:first-child { background: linear-gradient(90deg, #fff 16px, #efefef 16px); }
.hscroll { height: 13px; padding: 5px 0 0 14px; }
.hscroll i { display: block; height: 2px; width: 450px; max-width: 92%; background: #868686; border-radius: 1px; }
.pane-status { height: 19px; padding: 3px 2px; border-top: 1px solid #dcdcdc; border-bottom: 1px solid #dcdcdc; }
.remote .pane-status { padding-left: 1px; }

/* Queue */
.queue { flex: 1; min-height: 83px; margin-top: 4px; border: 1px solid #8f8f8f; border-left-width: 2px; background: #fff; }
.queue table { width: 568px; }
.q-file { width: 340px; }
.q-size { width: 60px; }
.q-prio { width: 48px; }
.q-stat { width: 120px; }
.queue th { height: 20px; }
.tabs {
  display: flex;
  align-items: flex-start;
  height: 22px;
  margin-top: 1px;
  padding-left: 5px;
  border-top: 1px solid #b0b0b0;
  border-bottom: 1px solid #dcdcdc;
  background: linear-gradient(#d2d2d2, #eee);
}
.tabs button { height: 17px; width: 81px; padding-left: 5px; border: 1px solid #b2b2b2; border-top: 0; border-radius: 0 0 2px 2px; background: #e6e6e6; text-align: left; white-space: nowrap; }
.tabs .active { width: 83px; background: #fff; font-weight: 700; }
.tabs .wide-tab { width: 115px; }
.statusbar { display: flex; align-items: center; justify-content: flex-end; height: 17px; gap: 3px; border-bottom: 1px solid #777; }
.statusbar svg { width: 12px; height: 12px; }
.queue-text { width: 96px; padding-left: 4px; }
.leds { display: flex; gap: 3px; height: 16px; align-items: center; padding: 0 4px 0 8px; border-left: 1px solid #d5d5d5; }
.led { width: 9px; height: 9px; border-radius: 50%; }
.green { background: radial-gradient(circle at 35% 30%, #b9d8bd, #1d6a30 55%, #0f4a1e); }
.red { background: radial-gradient(circle at 35% 30%, #e0b5b5, #7a2226 55%, #521013); }

/* Taskbar */
.taskbar { display: flex; height: 38px; align-items: center; background: linear-gradient(90deg, #14263b, #162a3e 25%, #1a2b46 60%, #16283f 82%, #1c242c); color: #fff; }
.weather { width: 172px; padding-left: 15px; position: relative; }
.weather svg { width: 26px; height: 24px; display: block; }
.weather span { position: absolute; left: 26px; top: 0; }
.apps { display: grid; grid-template-columns: repeat(18, 1fr); flex: 0 1 634px; height: 38px; }
.apps button { display: grid; place-items: center; }
.apps button svg { width: 20px; height: 20px; }
.apps .running { background: linear-gradient(#9ba2ab, #9ba2ab) center 33px / 5px 2px no-repeat; }
.apps .current { border-radius: 4px; background: linear-gradient(#58c5f5, #58c5f5) center 33px / 12px 2px no-repeat, #27364d; }
.tray { margin-left: auto; padding-right: 15px; display: flex; align-items: center; }
.tray svg { fill: none; stroke: #fff; width: 14px; height: 14px; }
.tray .chev { width: 10px; height: 10px; margin-right: 17px; }
.tray .net { margin-left: 14px; }
.tray .vol { margin: 0 13px 0 5px; }
.clock { display: flex; flex-direction: column; text-align: right; }
.clock time { line-height: 13px; }

/* Menu opened over the lists */
.context {
  position: absolute;
  left: 144px;
  top: 574px;
  width: 195px;
  height: 184px;
  padding: 1px 0 3px;
  display: flex;
  flex-direction: column;
  background: #f6f4f1;
  border-radius: 3px;
  box-shadow: 0 0 1px #888, 2px 6px 12px rgba(0, 0, 0, .25);
}
.context button { flex: 1; display: flex; align-items: center; text-align: left; padding-left: 29px; }
.context button svg { width: 12px; height: 12px; margin: 0 11px 0 -23px; }
.context hr { height: 1px; margin: 3px 7px; border: 0; background: #dcdcdc; }
.marks { position: absolute; left: 0; top: 549px; width: 240px; height: 60px; fill: none; stroke: #e0231f; stroke-width: 3; stroke-linecap: round; stroke-linejoin: round; }
```
